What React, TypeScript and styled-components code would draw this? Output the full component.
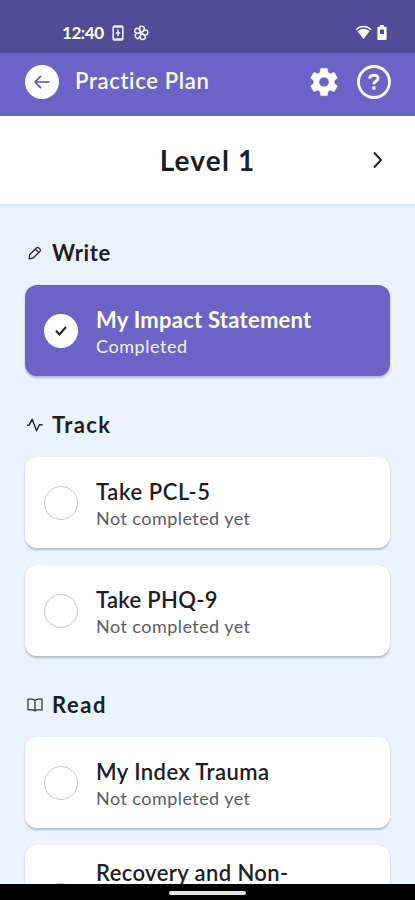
import React from "react";
import styled, { createGlobalStyle } from "styled-components";

const GlobalStyle = createGlobalStyle`
  * { box-sizing: border-box; }
  body { margin: 0; background: #e9f4fe; font-family: Lato, "Open Sans", sans-serif; }
`;

const Screen = styled.div`
  width: 415px;
  height: 900px;
  display: flex;
  flex-direction: column;
  overflow: hidden;
  background: #e9f4fe;
  color: #1d1e22;
`;

const StatusBar = styled.div`
  flex: none;
  height: 53px;
  padding: 12px 28px 0 62px;
  display: flex;
  align-items: center;
  color: #fff;
  background: #504d98;
`;

const Clock = styled.span`
  width: 50px;
  font-size: 17px;
  font-weight: 700;
  line-height: 20px;
  letter-spacing: -0.45px;
`;

const StatusIcons = styled.div<{ $gap: number; $end?: boolean }>`
  display: flex;
  align-items: center;
  gap: ${(p) => p.$gap}px;
  margin-left: ${(p) => (p.$end ? "auto" : 0)};
`;

const AppBar = styled.header`
  flex: none;
  height: 63px;
  padding: 0 24px 5px 25px;
  display: flex;
  align-items: center;
  color: #fff;
  background: #6c63c8;
`;

const BackButton = styled.button`
  width: 34px;
  height: 34px;
  padding: 0;
  border: 0;
  border-radius: 50%;
  background: #fff;
  display: grid;
  place-items: center;
`;

const BarTitle = styled.h1`
  margin: -2px 0 0 16px;
  flex: 1;
  font-size: 22px;
  line-height: 28px;
  font-weight: 600;
  letter-spacing: 0.65px;
  white-space: nowrap;
`;

const Actions = styled.div`
  display: flex;
  align-items: center;
  gap: 16px;
`;

const LevelBar = styled.div`
  flex: none;
  height: 88px;
  padding: 0 31px;
  display: grid;
  grid-template-columns: 12px 1fr 12px;
  align-items: center;
  justify-items: center;
  background: #fff;
  box-shadow: 0 1px 3px rgba(70, 90, 120, 0.12);
`;

const LevelName = styled.h2`
  grid-column: 2;
  margin: 0;
  font-size: 28px;
  line-height: 34px;
  font-weight: 700;
  letter-spacing: 1.15px;
`;

const Chevron = styled.div`
  display: flex;
`;

const Content = styled.main`
  flex: 1;
  min-height: 0;
  overflow: hidden;
  padding: 33px 25px 0;
  display: flex;
  flex-direction: column;
  gap: 33px;
`;

const Section = styled.section`
  flex: none;
  display: flex;
  flex-direction: column;
`;

const SectionHead = styled.div`
  height: 31px;
  margin-bottom: 17px;
  display: flex;
  align-items: center;
  gap: 7px;
`;

const SectionIcon = styled.span`
  width: 20px;
  display: flex;
  justify-content: center;
`;

const SectionName = styled.h3<{ $spacing: number }>`
  margin: 0;
  font-size: 22px;
  line-height: 30px;
  font-weight: 700;
  letter-spacing: ${(p) => p.$spacing}px;
`;

const CardList = styled.div`
  display: flex;
  flex-direction: column;
  gap: 17px;
`;

const Card = styled.article<{ $done?: boolean; $tall?: boolean }>`
  height: ${(p) => (p.$tall ? 110 : 91)}px;
  padding: 0 18px 0 19px;
  display: flex;
  align-items: center;
  gap: 18px;
  border-radius: 12px;
  color: ${(p) => (p.$done ? "#fff" : "#1d1e22")};
  background: ${(p) => (p.$done ? "#6c63c8" : "#fff")};
  box-shadow: 0 1.5px 2px rgba(45, 60, 80, 0.3);
`;

const Marker = styled.span<{ $done?: boolean }>`
  flex: none;
  width: 34px;
  height: 34px;
  border-radius: 50%;
  display: grid;
  place-items: center;
  background: #fff;
  border: ${(p) => (p.$done ? "0" : "1.5px solid #c7c7c9")};
`;

const CardText = styled.div<{ $tall?: boolean }>`
  height: ${(p) => (p.$tall ? "82px" : "auto")};
  padding-top: ${(p) => (p.$tall ? 0 : 3)}px;
  display: flex;
  flex-direction: column;
  white-space: nowrap;
`;

const CardTitle = styled.span<{ $spacing: number; $strong?: boolean }>`
  font-size: 22px;
  line-height: 28px;
  font-weight: ${(p) => (p.$strong ? 700 : 600)};
  letter-spacing: ${(p) => p.$spacing}px;
`;

const CardStatus = styled.span<{ $done?: boolean }>`
  font-size: 18px;
  line-height: 25px;
  font-weight: 400;
  letter-spacing: ${(p) => (p.$done ? 0.55 : 0.45)}px;
  color: ${(p) => (p.$done ? "#f3f2ff" : "#5c5d60")};
`;

const NavBar = styled.footer`
  flex: none;
  height: 16px;
  padding-top: 7px;
  display: flex;
  justify-content: center;
  background: #000;
`;

const HomeHandle = styled.div`
  width: 77px;
  height: 4px;
  border-radius: 2px;
  background: #e4e4e4;
`;

const BatteryPhone = () => (
  <svg width="12" height="16" viewBox="0 0 12 16" fill="none" stroke="#f1f0fc">
    <rect x="1.2" y="1" width="9.6" height="14" rx="1.2" strokeWidth="1.6" />
    <path d="M1.5 2h9M1.5 14h9" strokeWidth="1.5" />
    <path d="M6 4.5v6.5M3.8 8h4.4" strokeWidth="1.5" />
  </svg>
);

const Pinwheel = () => (
  <svg width="16" height="16" viewBox="0 0 16 16" fill="none" stroke="#f1f0fc" strokeWidth="1.5" strokeLinejoin="round">
    {[10, 82, 154, 226, 298].map((angle) => (
      <path key={angle} transform={`rotate(${angle} 8 8)`} d="M8 7.8 6 5V1.6q3.8-1.2 4.7 1.2.5 2-2.7 5Z" />
    ))}
    <circle cx="8" cy="8" r="1.2" fill="#f1f0fc" stroke="none" />
  </svg>
);

const Wifi = () => (
  <svg width="17" height="15" viewBox="0 0 17 15" fill="none">
    <path d="M1 4.7C5.2.5 11.8.5 16 4.7" stroke="#fff" strokeWidth="1.6" />
    <path d="M2.4 6.3C6 2.9 11 2.9 14.6 6.3L8.5 14Z" fill="#fff" />
  </svg>
);

const Battery = () => (
  <svg width="10" height="15" viewBox="0 0 10 15">
    <path d="M3 0h4v1.7h1.6q1 0 1 1V14q0 1-1 1H1.4q-1 0-1-1V2.7q0-1 1-1H3Z" fill="#fff" />
    <path d="M3 4.5h4V9H3Z" fill="#504d98" />
  </svg>
);

const BackArrow = () => (
  <svg width="18" height="16" viewBox="0 0 18 16" fill="none" stroke="#5d559f" strokeWidth="1.7" strokeLinecap="round" strokeLinejoin="round">
    <path d="M7.5 2.4 2 8l5.5 5.6M2 8h14" />
  </svg>
);

const Gear = () => (
  <svg width="34" height="34" viewBox="0 0 24 24" fill="#fff" stroke="#fff" strokeWidth="0.4">
    <path d="M19.14 12.94c.04-.3.06-.61.06-.94s-.02-.64-.07-.94l2.03-1.58a.49.49 0 0 0 .12-.61l-1.92-3.32a.49.49 0 0 0-.59-.22l-2.39.96a7.03 7.03 0 0 0-1.62-.94l-.36-2.54a.48.48 0 0 0-.48-.41h-3.84a.47.47 0 0 0-.47.41l-.36 2.54c-.59.24-1.13.57-1.62.94l-2.39-.96a.48.48 0 0 0-.59.22L2.74 8.87a.48.48 0 0 0 .12.61l2.03 1.58c-.05.3-.09.63-.09.94s.02.64.07.94l-2.03 1.58a.49.49 0 0 0-.12.61l1.92 3.32c.12.22.37.29.59.22l2.39-.96c.5.38 1.03.7 1.62.94l.36 2.54c.05.24.24.41.48.41h3.84c.24 0 .44-.17.47-.41l.36-2.54c.59-.24 1.13-.56 1.62-.94l2.39.96c.22.08.47 0 .59-.22l1.92-3.32a.48.48 0 0 0-.12-.61ZM12 15.6a3.6 3.6 0 1 1 0-7.2 3.6 3.6 0 0 1 0 7.2Z" />
  </svg>
);

const Help = () => (
  <svg width="34" height="34" viewBox="0 0 34 34" fill="none" stroke="#fff">
    <circle cx="17" cy="17" r="15.5" strokeWidth="2.8" />
    <path d="M12.7 13.6c.4-4.6 8.4-4.4 8.4-.4 0 2.9-4.2 2.8-4.2 6.1" strokeWidth="2.9" />
    <path d="M15.3 21.4h3.2v3.2h-3.2z" fill="#fff" stroke="none" />
  </svg>
);

const NextChevron = () => (
  <svg width="12" height="18" viewBox="0 0 12 18" fill="none" stroke="#222" strokeWidth="2">
    <path d="m2 1.5 7 7.5-7 7.5" />
  </svg>
);

const Check = () => (
  <svg width="12" height="10" viewBox="0 0 12 10" fill="none" stroke="#202024" strokeWidth="2">
    <path d="m1 4.8 3.4 3.6L11 1" />
  </svg>
);

const Pencil = () => (
  <svg width="14" height="14" viewBox="0 0 14 14" fill="none" stroke="#282a30" strokeWidth="1.3" strokeLinejoin="round">
    <path d="M1.2 12.8 1.6 8.8 8.3 2q1.3-1.2 2.5-.1l1.2 1.2q1.1 1.2-.1 2.4L5.2 12ZM7.4 3.2l3.4 3.4" />
  </svg>
);

const Pulse = () => (
  <svg width="18" height="16" viewBox="0 0 18 16" fill="none" stroke="#282a30" strokeWidth="1.5" strokeLinejoin="round">
    <path d="M1.2 8.2h1.9L6.2 2.2l4.4 11.6 2.8-6.1h3.2" />
  </svg>
);

const Book = () => (
  <svg width="16" height="14" viewBox="0 0 16 14" fill="none" stroke="#30323a" strokeWidth="1.25" strokeLinejoin="round">
    <path d="M8 2.5Q6.8 1 4.8 1H1v10.8h4.2q2 0 2.8 1.2.8-1.2 2.8-1.2H15V1h-3.8Q9.2 1 8 2.5V13" />
  </svg>
);

type Task = { title: string; spacing: number; status?: string; done?: boolean };
type Group = { name: string; spacing: number; icon: React.ReactNode; tasks: Task[] };

const pending = "Not completed yet";

const groups: Group[] = [
  {
    name: "Write",
    spacing: 0.6,
    icon: <Pencil />,
    tasks: [{ title: "My Impact Statement", spacing: 0.25, status: "Completed", done: true }],
  },
  {
    name: "Track",
    spacing: 1.35,
    icon: <Pulse />,
    tasks: [
      { title: "Take PCL-5", spacing: 0.6, status: pending },
      { title: "Take PHQ-9", spacing: 0.3, status: pending },
    ],
  },
  {
    name: "Read",
    spacing: 1.6,
    icon: <Book />,
    tasks: [
      { title: "My Index Trauma", spacing: 0.45, status: pending },
      { title: "Recovery and Non-", spacing: 0.4 },
    ],
  },
];

export default function App() {
  return (
    <Screen>
      <GlobalStyle />
      <StatusBar>
        <Clock>12:40</Clock>
        <StatusIcons $gap={9}>
          <BatteryPhone />
          <Pinwheel />
        </StatusIcons>
        <StatusIcons $gap={5} $end>
          <Wifi />
          <Battery />
        </StatusIcons>
      </StatusBar>
      <AppBar>
        <BackButton aria-label="Back"><BackArrow /></BackButton>
        <BarTitle>Practice Plan</BarTitle>
        <Actions>
          <Gear />
          <Help />
        </Actions>
      </AppBar>
      <LevelBar>
        <LevelName>Level 1</LevelName>
        <Chevron><NextChevron /></Chevron>
      </LevelBar>
      <Content>
        {groups.map((group) => (
          <Section key={group.name}>
            <SectionHead>
              <SectionIcon>{group.icon}</SectionIcon>
              <SectionName $spacing={group.spacing}>{group.name}</SectionName>
            </SectionHead>
            <CardList>
              {group.tasks.map((task) => (
                <Card key={task.title} $done={task.done} $tall={!task.status}>
                  <Marker $done={task.done}>{task.done && <Check />}</Marker>
                  <CardText $tall={!task.status}>
                    <CardTitle $spacing={task.spacing} $strong={task.done}>{task.title}</CardTitle>
                    {task.status && <CardStatus $done={task.done}>{task.status}</CardStatus>}
                  </CardText>
                </Card>
              ))}
            </CardList>
          </Section>
        ))}
      </Content>
      <NavBar><HomeHandle /></NavBar>
    </Screen>
  );
}
